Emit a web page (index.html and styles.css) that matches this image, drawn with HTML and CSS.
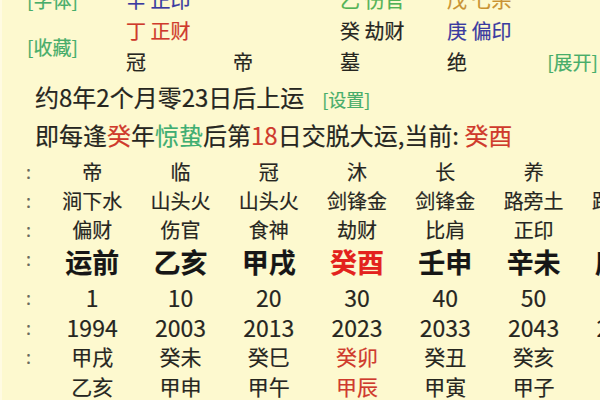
FILE: index.html
```html
<!DOCTYPE html>
<html lang="zh">
<head>
<meta charset="utf-8">
<link rel="stylesheet" href="styles.css">
</head>
<body>
<div class="page">
  <div class="top">
    <div class="lbl r1">[字体]</div>
    <div class="cell ca r1 blue">辛 正印</div>
    <div class="cell cc r1 green">乙 伤官</div>
    <div class="cell cd r1 orange">戊 七杀</div>

    <div class="lbl r23">[收藏]</div>
    <div class="cell ca r2 red">丁 正财</div>
    <div class="cell cc r2">癸 劫财</div>
    <div class="cell cd r2 blue">庚 偏印</div>

    <div class="cell ca r3">冠</div>
    <div class="cell cb r3">帝</div>
    <div class="cell cc r3">墓</div>
    <div class="cell cd r3 split"><span>绝</span><span class="link">[展开]</span></div>
  </div>

  <div class="info">
    <div class="line">约8年2个月零23日后上运<span class="set">[设置]</span></div>
    <div class="line">即每逢<span class="red">癸</span>年<span class="green2">惊蛰</span>后第<span class="red">18</span>日交脱大运,当前: <span class="red">癸酉</span></div>
  </div>

  <div class="dayun">
    <div class="row small"><span class="colon">:</span><span>帝</span><span>临</span><span>冠</span><span>沐</span><span>长</span><span>养</span><span>胎</span></div>
    <div class="row small"><span class="colon">:</span><span>涧下水</span><span>山头火</span><span>山头火</span><span>剑锋金</span><span>剑锋金</span><span>路旁土</span><span>路旁土</span></div>
    <div class="row small"><span class="colon">:</span><span>偏财</span><span>伤官</span><span>食神</span><span>劫财</span><span>比肩</span><span>正印</span><span>偏印</span></div>
    <div class="row big"><span class="colon">:</span><span>运前</span><span>乙亥</span><span>甲戌</span><span class="hot">癸酉</span><span>壬申</span><span>辛未</span><span>庚午</span></div>
    <div class="row num first"><span class="colon">:</span><span>1</span><span>10</span><span>20</span><span>30</span><span>40</span><span>50</span><span>60</span></div>
    <div class="row num"><span class="colon">:</span><span>1994</span><span>2003</span><span>2013</span><span>2023</span><span>2033</span><span>2043</span><span>2053</span></div>
    <div class="row mid"><span class="colon">:</span><span>甲戌</span><span>癸未</span><span>癸巳</span><span class="red">癸卯</span><span>癸丑</span><span>癸亥</span><span>癸酉</span></div>
    <div class="row mid"><span class="colon"></span><span>乙亥</span><span>甲申</span><span>甲午</span><span class="red">甲辰</span><span>甲寅</span><span>甲子</span><span>甲戌</span></div>
  </div>
</div>
</body>
</html>
```

FILE: styles.css
```css
html, body {
  margin: 0;
  padding: 0;
  background: #fdf9cf;
}
body {
  font-family: "Noto Sans CJK SC", "Noto Sans", sans-serif;
  color: #26261f;
  -webkit-text-stroke: 0.2px currentColor;
}
.page {
  width: 600px;
  height: 400px;
  overflow: hidden;
  border-left: 2px solid #fffbe2;
  box-sizing: border-box;
}
.top {
  display: grid;
  grid-template-columns: 99px 107px 107px 107px 1fr;
  grid-template-rows: 31px 31px 31px;
  margin-top: -16px;
  padding-left: 25px;
  padding-right: 2px;
  font-size: 20px;
  line-height: 31px;
}
.lbl {
  grid-column: 1;
  color: #47ad6a;
  font-size: 19px;
  align-self: center;
}
.r1 { grid-row: 1; }
.r2 { grid-row: 2; }
.r3 { grid-row: 3; }
.r23 { grid-row: 2 / 4; }
.ca { grid-column: 2; }
.cb { grid-column: 3; }
.cc { grid-column: 4; }
.cd { grid-column: 5; }
.split {
  display: flex;
  justify-content: space-between;
}
.link { color: #47ad6a; font-size: 19px; }
.blue { color: #3a3aa0; }
.red { color: #cf3a2c; }
.green { color: #52b255; }
.green2 { color: #3fae72; }
.orange { color: #c99232; }

.info {
  margin-top: 2px;
  padding-left: 33px;
  font-size: 24px;
  line-height: 35px;
  white-space: nowrap;
}
.set {
  color: #47ad6a;
  font-size: 18px;
  margin-left: 18px;
}

.dayun {
  margin-top: 5px;
}
.row {
  display: grid;
  grid-template-columns: 46px repeat(7, 88.3px);
  text-align: center;
  white-space: nowrap;
}
.row > span { display: block; }
.row .colon {
  text-align: left;
  padding-left: 24px;
  color: #6a6a5e;
  font-size: 18px;
  font-weight: normal;
}
.small {
  font-size: 20px;
  line-height: 29px;
}
.big {
  font-size: 27px;
  font-weight: bold;
  line-height: 36px;
  color: #161616;
}
.big .colon { line-height: 28px; }
.hot { color: #e3221d; }
.num {
  font-size: 23px;
  line-height: 29.5px;
}
.num.first { margin-top: 3px; }
.mid {
  font-size: 21px;
  line-height: 29.5px;
}
```
